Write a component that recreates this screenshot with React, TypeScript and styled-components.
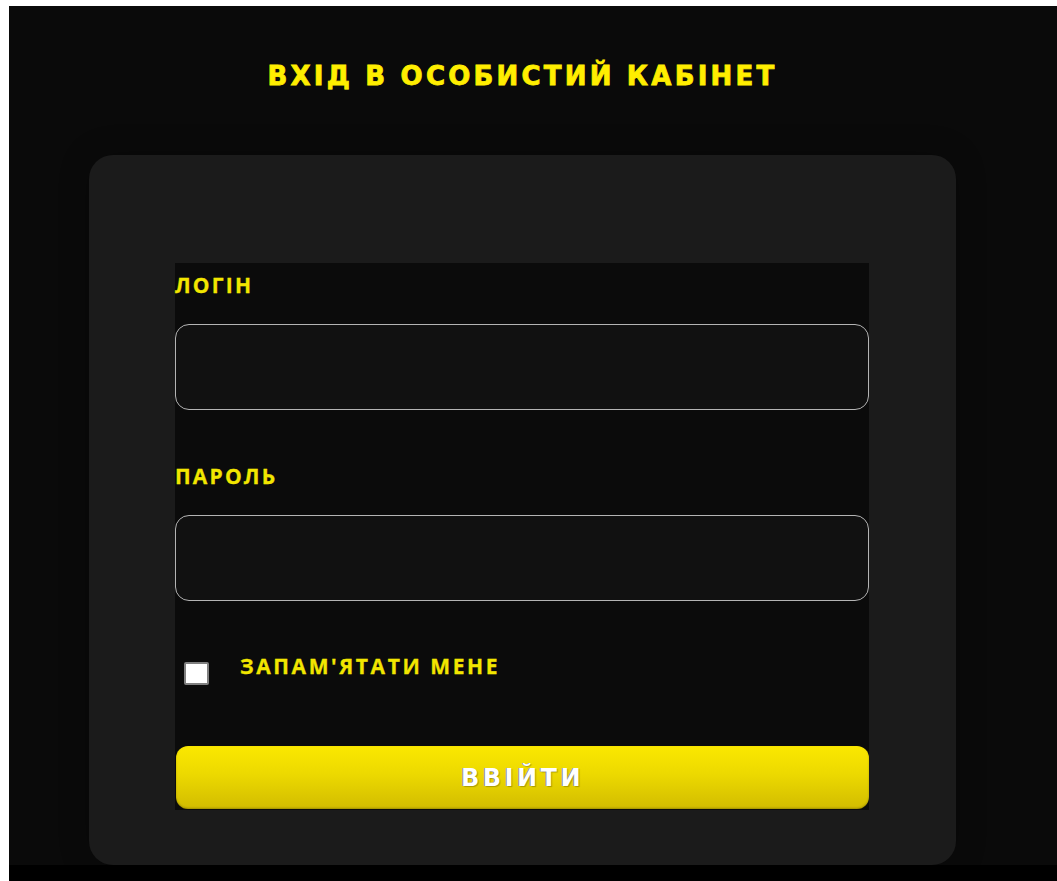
import styled, { createGlobalStyle } from "styled-components";

const GlobalStyle = createGlobalStyle`
  html, body {
    margin: 0;
    padding: 0;
    background: #000;
  }
  * {
    box-sizing: border-box;
  }
`;

const App = () => {
  return (
    <>
      <GlobalStyle />
      <Frame>
        <Page>
          <Title>ВХІД В ОСОБИСТИЙ КАБІНЕТ</Title>
          <Card>
            <Form onSubmit={(e) => e.preventDefault()}>
              <Label htmlFor="login">ЛОГІН</Label>
              <Input id="login" type="text" />
              <Label htmlFor="password" $spaced>
                ПАРОЛЬ
              </Label>
              <Input id="password" type="password" />
              <RememberRow>
                <Checkbox type="checkbox" id="remember" />
                <RememberLabel htmlFor="remember">ЗАПАМ'ЯТАТИ МЕНЕ</RememberLabel>
              </RememberRow>
              <SubmitButton type="submit">ВВІЙТИ</SubmitButton>
            </Form>
          </Card>
        </Page>
      </Frame>
    </>
  );
};

export default App;

const Frame = styled.div`
  min-height: 881px;
  border-top: 6px solid #fff;
  border-left: 9px solid #fff;
  background: #000;
`;

const Page = styled.div`
  height: 859px;
  background: #0a0a0a;
  display: flex;
  flex-direction: column;
  align-items: flex-start;
  padding: 54px 0 0 80px;
`;

const Title = styled.h1`
  width: 867px;
  margin: 0;
  text-align: center;
  font-family: "DejaVu Sans", Verdana, sans-serif;
  font-weight: 700;
  font-size: 26px;
  line-height: 32px;
  letter-spacing: 3.2px;
  color: #ffee00;
  -webkit-text-stroke: 0.8px #ffee00;
`;

const Card = styled.div`
  margin-top: 63px;
  width: 867px;
  height: 710px;
  border-radius: 24px;
  background: #1b1b1b;
  box-shadow: 0 0 30px rgba(0, 0, 0, 0.25);
  padding: 108px 87px 0 86px;
`;

const Form = styled.form`
  width: 694px;
  height: 547px;
  background: #0b0b0b;
  display: flex;
  flex-direction: column;
  padding-top: 8px;
`;

const Label = styled.label<{ $spaced?: boolean }>`
  display: block;
  margin-top: ${(p) => (p.$spaced ? "52px" : "0")};
  font-family: "Open Sans", "Noto Sans", sans-serif;
  font-weight: 700;
  font-size: 21px;
  line-height: 28px;
  letter-spacing: 2.2px;
  color: #f2e600;
  -webkit-text-stroke: 0.3px #f2e600;
`;

const Input = styled.input`
  margin-top: 25px;
  width: 694px;
  height: 86px;
  border: 1.5px solid #b4b4b4;
  border-radius: 14px;
  background: #111;
  color: #fff;
  font-size: 20px;
  padding: 0 16px;
  outline: none;
`;

const RememberRow = styled.div`
  margin-top: 52px;
  display: flex;
  align-items: flex-start;
  padding-left: 9px;
  height: 35px;
`;

const Checkbox = styled.input`
  appearance: none;
  margin: 9px 0 0;
  width: 25px;
  height: 23px;
  background: #fff;
  border: 2px solid #808080;
  border-radius: 2px;
`;

const RememberLabel = styled.label`
  margin-left: 31px;
  font-family: "Open Sans", "Noto Sans", sans-serif;
  font-weight: 700;
  font-size: 21px;
  line-height: 26px;
  letter-spacing: 2.6px;
  color: #f2e600;
  -webkit-text-stroke: 0.3px #f2e600;
`;

const SubmitButton = styled.button`
  margin-top: 58px;
  width: 693px;
  margin-left: 1px;
  height: 63px;
  border: none;
  border-radius: 12px;
  background: linear-gradient(180deg, #fbe800 0%, #ecd900 45%, #d2bc00 100%);
  box-shadow: inset 0 -1px 2px rgba(0, 0, 0, 0.25);
  font-family: "DejaVu Sans", Verdana, sans-serif;
  font-weight: 700;
  font-size: 24px;
  letter-spacing: 3.5px;
  color: #fff;
  text-shadow: -1px 0 rgba(60, 80, 200, 0.6), 1px 1px 1px rgba(0, 0, 0, 0.25);
  cursor: pointer;
`;
